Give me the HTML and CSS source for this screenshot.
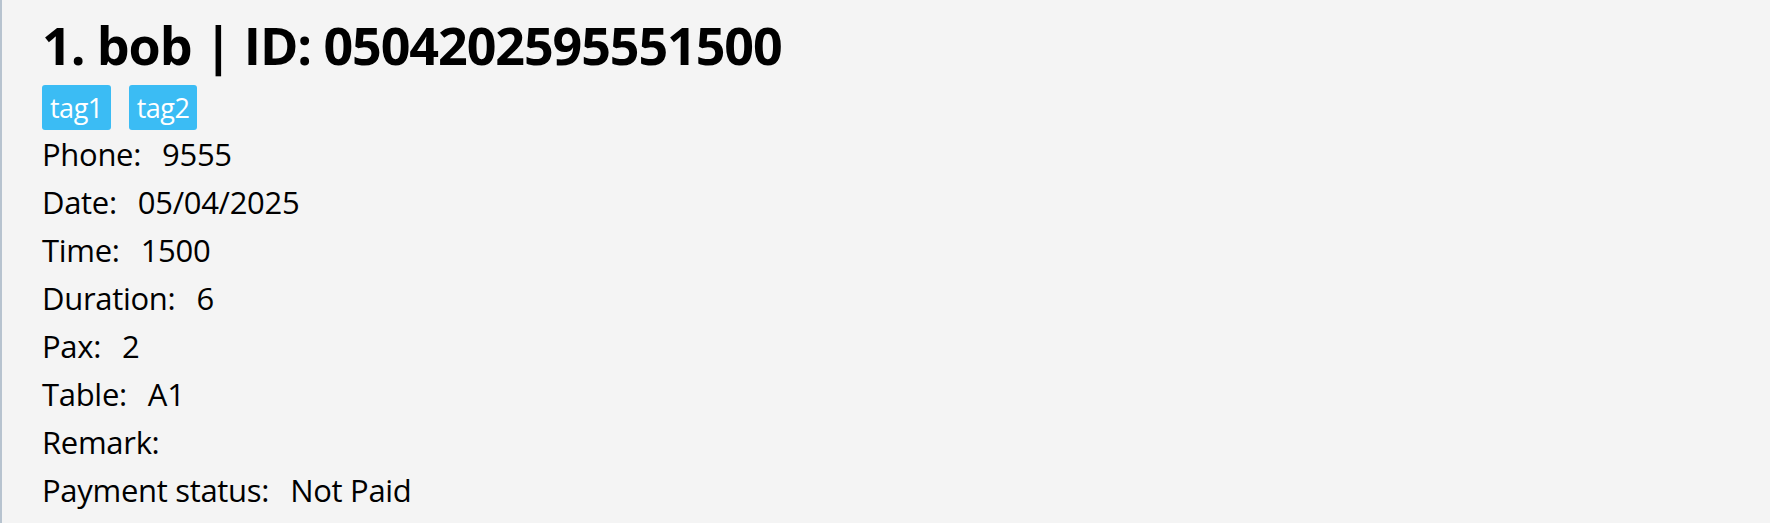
FILE: index.html
```html
<!DOCTYPE html>
<html>
<head>
<meta charset="utf-8">
<link rel="stylesheet" href="styles.css">
</head>
<body>
<div class="card">
  <h1 class="title">1. bob | ID: 0504202595551500</h1>
  <div class="tags">
    <span class="tag">tag1</span>
    <span class="tag">tag2</span>
  </div>
  <div class="fields">
    <div class="row"><span class="label">Phone:</span><span class="value">9555</span></div>
    <div class="row"><span class="label">Date:</span><span class="value">05/04/2025</span></div>
    <div class="row"><span class="label">Time:</span><span class="value">1500</span></div>
    <div class="row"><span class="label">Duration:</span><span class="value">6</span></div>
    <div class="row"><span class="label">Pax:</span><span class="value">2</span></div>
    <div class="row"><span class="label">Table:</span><span class="value">A1</span></div>
    <div class="row"><span class="label">Remark:</span><span class="value"></span></div>
    <div class="row"><span class="label">Payment status:</span><span class="value">Not Paid</span></div>
  </div>
</div>
</body>
</html>
```

FILE: styles.css
```css
html, body {
  margin: 0;
  padding: 0;
  height: 100%;
  background: #f4f4f4;
}
body {
  font-family: "Open Sans", "Noto Sans", sans-serif;
  color: #000;
}
.card {
  box-sizing: border-box;
  height: 523px;
  border-left: 2px solid #b7c3cf;
  padding: 15px 0 0 40px;
  overflow: hidden;
}
.title {
  margin: 0;
  font-size: 52px;
  line-height: 60px;
  font-weight: 700;
  letter-spacing: -1.1px;
}
.tags {
  display: flex;
  gap: 18px;
  margin-top: 10px;
}
.tag {
  background: #3bbcf4;
  color: #fff;
  font-size: 27px;
  line-height: 45px;
  height: 45px;
  padding: 0 8px;
  border-radius: 3px;
  letter-spacing: -0.5px;
}
.row {
  display: flex;
  gap: 21px;
  font-size: 31px;
  line-height: 48px;
  height: 48px;
  letter-spacing: -0.3px;
}
```
